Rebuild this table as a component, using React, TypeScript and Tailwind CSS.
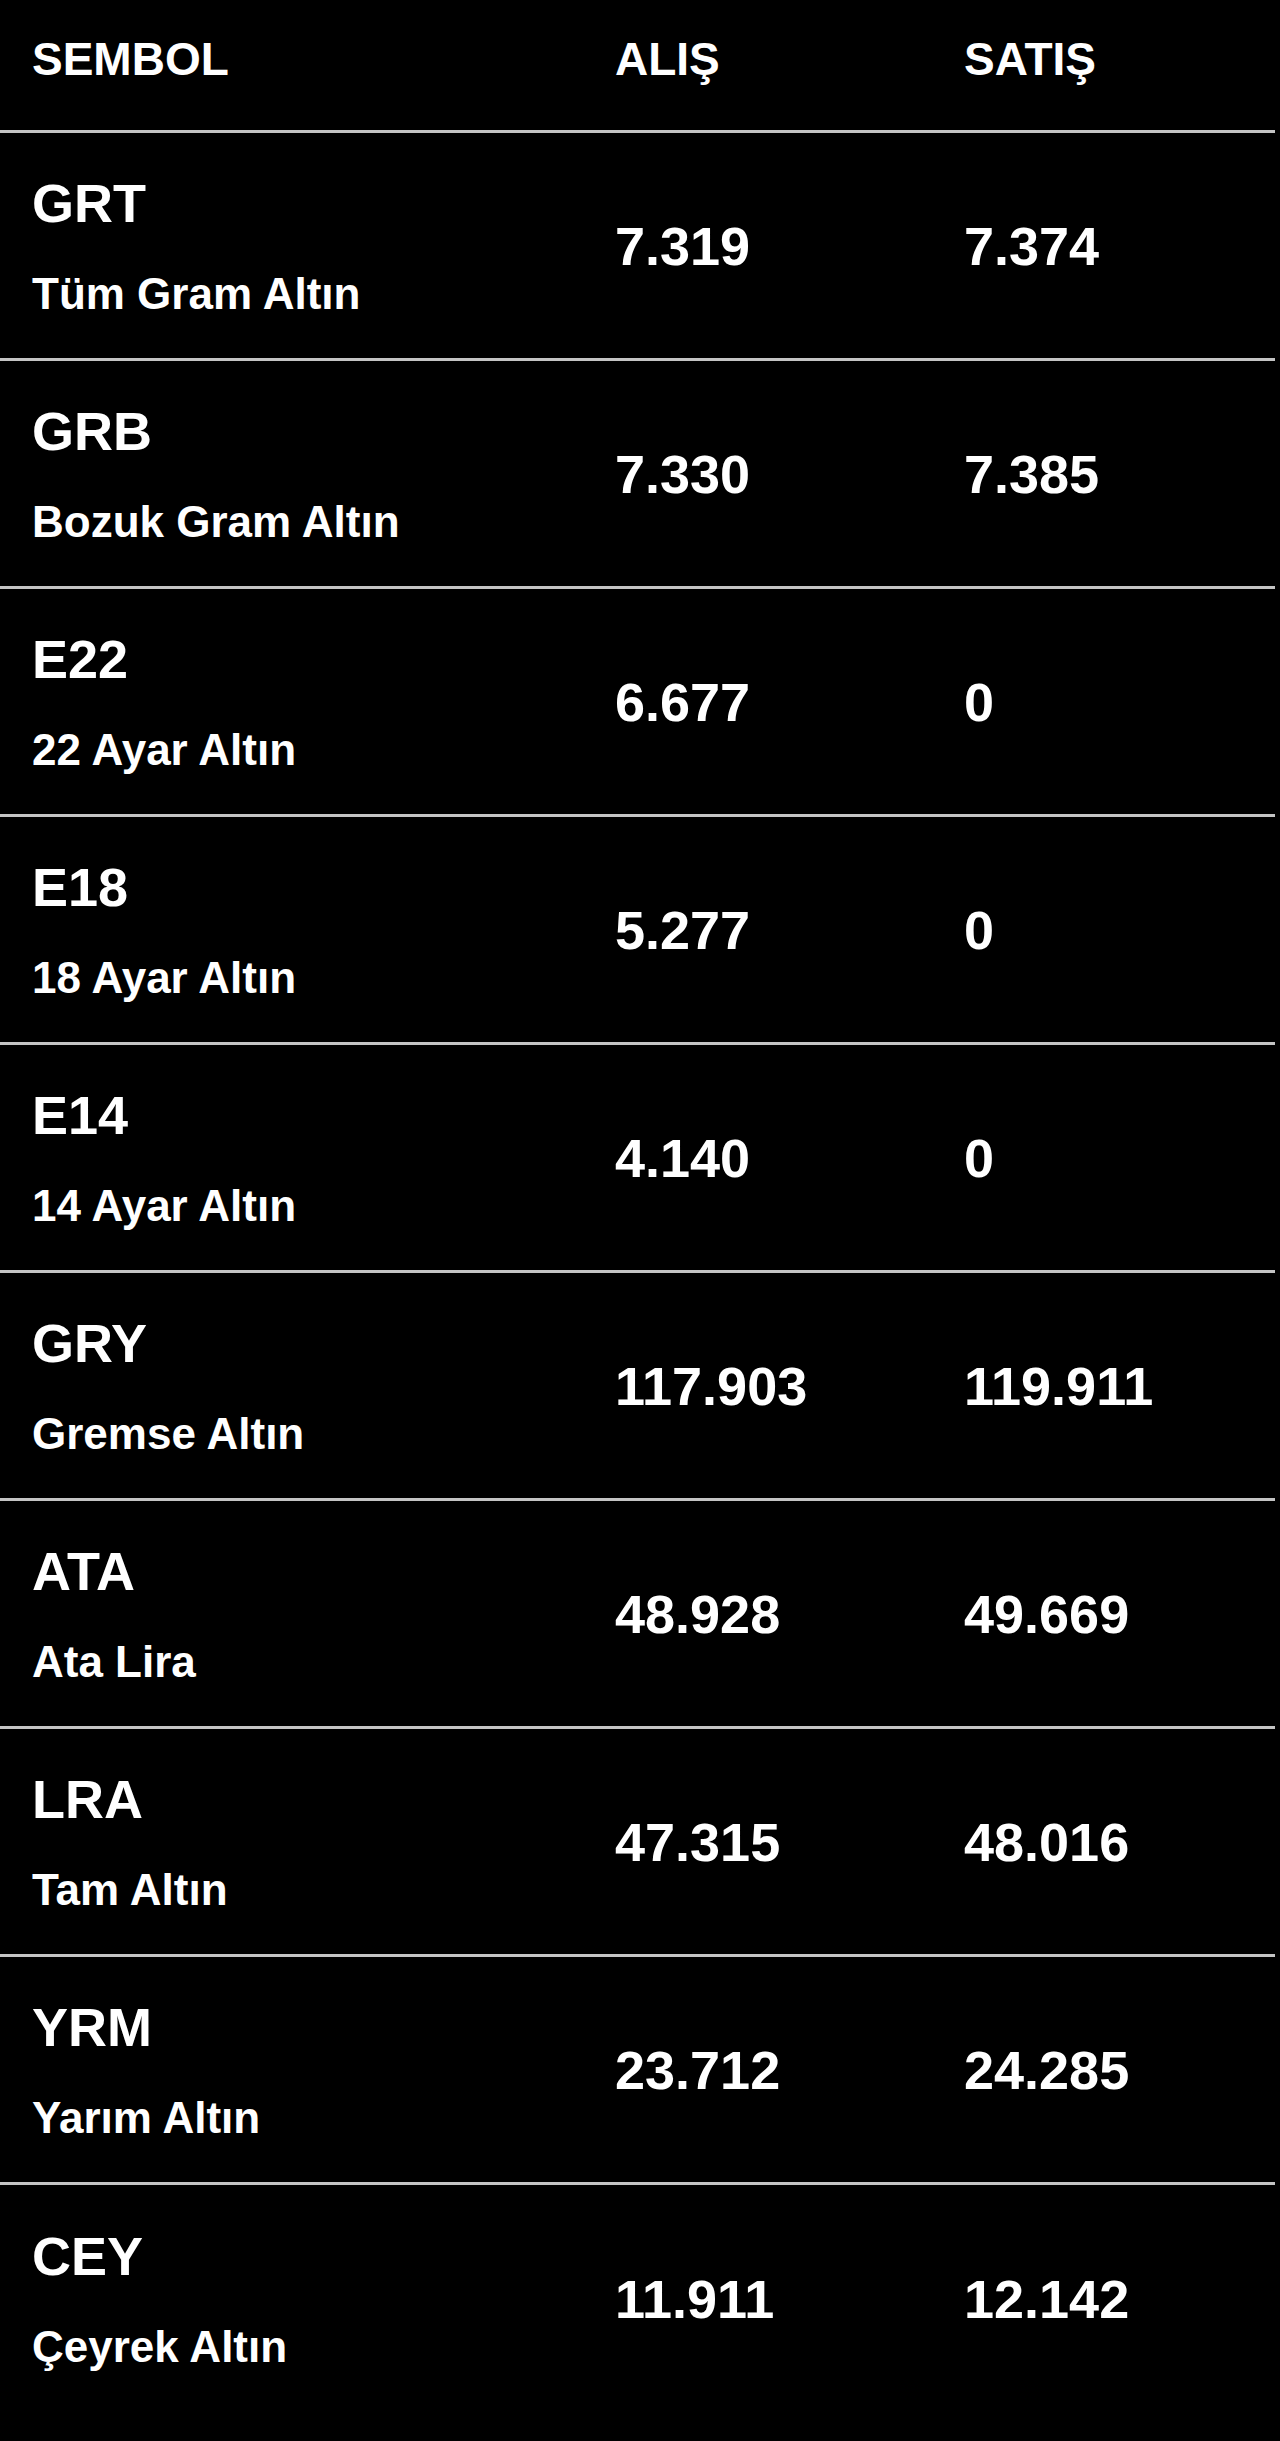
import React from "react";

type Row = { sym: string; name: string; buy: string; sell: string };

const rows: Row[] = [
  { sym: "GRT", name: "Tüm Gram Altın", buy: "7.319", sell: "7.374" },
  { sym: "GRB", name: "Bozuk Gram Altın", buy: "7.330", sell: "7.385" },
  { sym: "E22", name: "22 Ayar Altın", buy: "6.677", sell: "0" },
  { sym: "E18", name: "18 Ayar Altın", buy: "5.277", sell: "0" },
  { sym: "E14", name: "14 Ayar Altın", buy: "4.140", sell: "0" },
  { sym: "GRY", name: "Gremse Altın", buy: "117.903", sell: "119.911" },
  { sym: "ATA", name: "Ata Lira", buy: "48.928", sell: "49.669" },
  { sym: "LRA", name: "Tam Altın", buy: "47.315", sell: "48.016" },
  { sym: "YRM", name: "Yarım Altın", buy: "23.712", sell: "24.285" },
  { sym: "CEY", name: "Çeyrek Altın", buy: "11.911", sell: "12.142" },
];

export default function App() {
  return (
    <div
      className="min-h-[2441px] w-[1280px] bg-black text-white"
      style={{ fontFamily: '"Liberation Sans", Arial, sans-serif' }}
    >
      <div className="w-[1275px]">
        <div className="grid h-[133px] grid-cols-[583px_349px_1fr] border-b-[3px] border-[#c4c4c4] pl-[32px] pt-[36px] text-[46px] font-bold leading-[46px]">
          <div>SEMBOL</div>
          <div>ALIŞ</div>
          <div>SATIŞ</div>
        </div>
        {rows.map((r, i) => (
          <div
            key={r.sym}
            className={
              i === rows.length - 1
                ? "grid h-[228px] grid-cols-[583px_349px_1fr] items-center pl-[32px]"
                : "grid h-[228px] grid-cols-[583px_349px_1fr] items-center border-b-[3px] border-[#c4c4c4] pl-[32px]"
            }
          >
            <div className="flex flex-col">
              <div className="text-[54px] font-bold leading-[54px]">{r.sym}</div>
              <div className="mt-[42px] text-[44px] font-bold leading-[44px]">{r.name}</div>
            </div>
            <div className="text-[54px] font-bold leading-[54px]">{r.buy}</div>
            <div className="text-[54px] font-bold leading-[54px]">{r.sell}</div>
          </div>
        ))}
      </div>
    </div>
  );
}
